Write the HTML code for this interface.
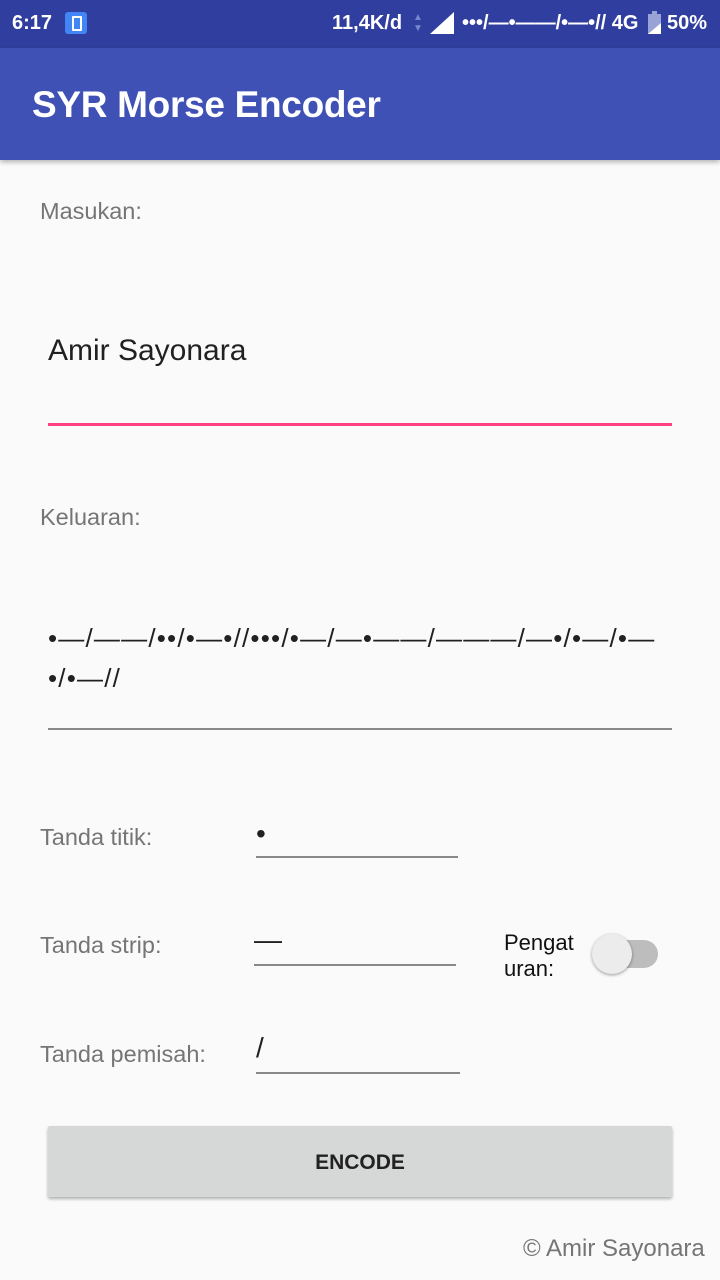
<!DOCTYPE html><html><head><style>
body{margin:0;width:720px;height:1280px;background:#fafafa;font-family:"Liberation Sans",sans-serif;position:relative;overflow:hidden}
.a{position:absolute;white-space:nowrap}
.lbl{color:#757575;font-size:23.5px}
.ln{position:absolute;height:2px;background:#888}
</style></head><body>
<div class="a" style="left:0;top:0;width:720px;height:48px;background:#303f9f"></div>
<div class="a" style="left:12px;top:12px;color:#fff;font-weight:bold;font-size:20px">6:17</div>
<div class="a" style="left:65px;top:12px;width:22px;height:22px;background:#4285f4;border-radius:3px"><div style="position:absolute;left:7px;top:4px;width:6px;height:11px;border:2px solid #fff;border-radius:1px"></div></div>
<div class="a" style="left:332px;top:12px;color:#fff;font-weight:bold;font-size:20px">11,4K/d</div>
<div class="a" style="left:413px;top:12px;color:#7986cb;font-size:10px;line-height:11px">▲<br>▼</div>
<svg class="a" style="left:430px;top:12px" width="24" height="22"><polygon points="0,22 24,22 24,0" fill="#fff"/></svg>
<div class="a" style="left:462px;top:12px;color:#fff;font-weight:bold;font-size:20px">•••/—•——/•—•// 4G</div>
<svg class="a" style="left:647px;top:11px" width="16" height="24"><rect x="1" y="3" width="13" height="20" fill="#9aa3d6"/><rect x="5" y="0" width="5" height="3" fill="#9aa3d6"/><polygon points="1,23 14,23 14,12" fill="#fff"/></svg>
<div class="a" style="left:667px;top:12px;color:#fff;font-weight:bold;font-size:20px">50%</div>
<div class="a" style="left:0;top:48px;width:720px;height:112px;background:#3f51b5;box-shadow:0 2px 5px rgba(0,0,0,.3)"></div>
<div class="a" style="left:32px;top:84px;color:#fff;font-size:37px;font-weight:bold;letter-spacing:-0.3px">SYR Morse Encoder</div>
<div class="a lbl" style="left:40px;top:198px">Masukan:</div>
<div class="a" style="left:48px;top:334px;font-size:30px;color:#212121">Amir Sayonara</div>
<div class="ln" style="left:48px;top:423px;width:624px;height:3px;background:#ff4081"></div>
<div class="a lbl" style="left:40px;top:504px">Keluaran:</div>
<div class="a" style="left:48px;top:618px;font-size:26px;color:#212121;line-height:40px;letter-spacing:1.2px">•—/——/••/•—•//•••/•—/—•——/———/—•/•—/•—<br>•/•—//</div>
<div class="ln" style="left:48px;top:728px;width:624px"></div>
<div class="a lbl" style="left:40px;top:824px">Tanda titik:</div>
<div class="a" style="left:256px;top:818px;font-size:28px;color:#212121">•</div>
<div class="ln" style="left:256px;top:856px;width:202px"></div>
<div class="a lbl" style="left:40px;top:932px">Tanda strip:</div>
<div class="a" style="left:254px;top:924px;font-size:28px;color:#212121">—</div>
<div class="ln" style="left:254px;top:964px;width:202px"></div>
<div class="a" style="left:504px;top:930px;font-size:22px;color:#111;line-height:26px">Pengat<br>uran:</div>
<div class="a" style="left:598px;top:940px;width:60px;height:28px;border-radius:14px;background:#bdbdbd"></div>
<div class="a" style="left:592px;top:934px;width:40px;height:40px;border-radius:50%;background:#ececec;box-shadow:0 1px 3px rgba(0,0,0,.4)"></div>
<div class="a lbl" style="left:40px;top:1041px">Tanda pemisah:</div>
<div class="a" style="left:256px;top:1032px;font-size:28px;color:#212121">/</div>
<div class="ln" style="left:256px;top:1072px;width:204px"></div>
<div class="a" style="left:48px;top:1126px;width:624px;height:71px;background:#d6d7d7;border-radius:2px;box-shadow:0 2px 3px rgba(0,0,0,.3);text-align:center;line-height:74px;font-size:21px;font-weight:bold;color:#222">ENCODE</div>
<div class="a" style="left:523px;top:1235px;font-size:24px;color:#757575">© Amir Sayonara</div>
</body></html>
